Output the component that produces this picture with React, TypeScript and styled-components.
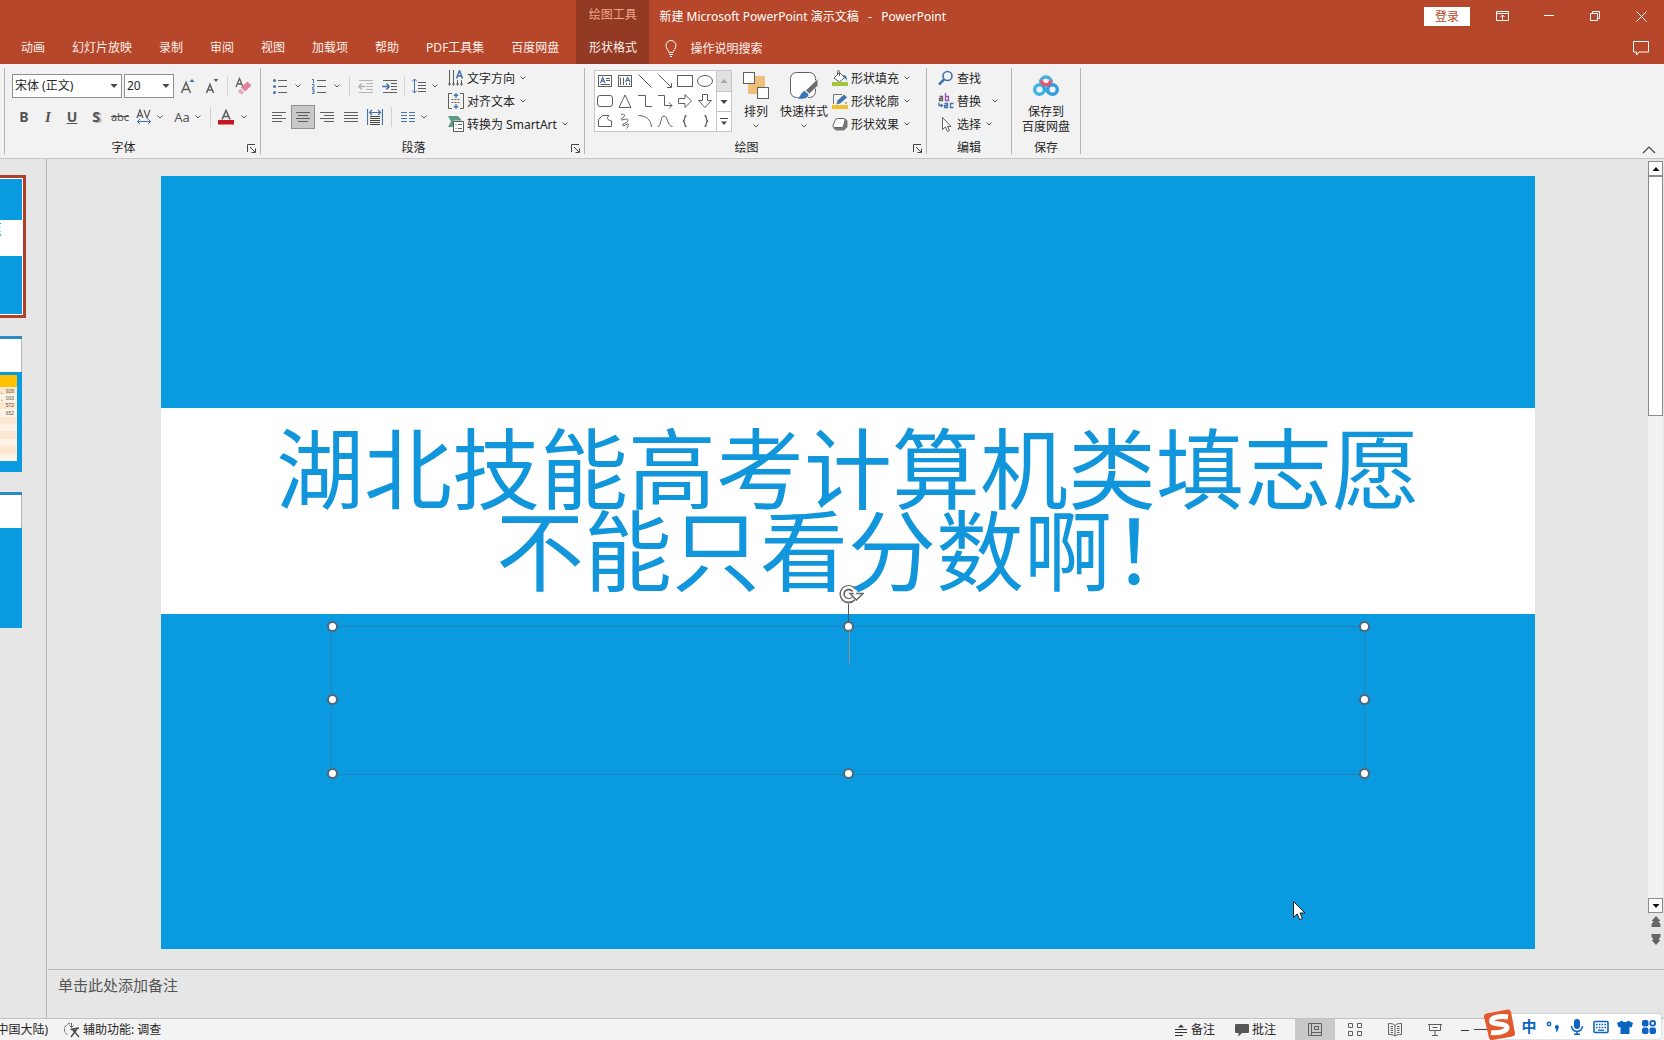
import React from "react";
import styled, { createGlobalStyle } from "styled-components";

const FONT = `"Noto Sans", "Noto Sans CJK SC", sans-serif`;
const RED = "#b7472a";
const SLIDE_BLUE = "#0a9adf";
const INK = "#5f5f5f";
const BLUE = "#4472ab";

const GlobalStyle = createGlobalStyle`
  *, *::before, *::after { box-sizing: border-box; }
  body { margin: 0; font-family: ${FONT}; font-size: 12px; color: #262626; background: #e6e6e6; }
  button, select, textarea, input { font: inherit; color: inherit; margin: 0; }
  button { background: none; border: 0; padding: 0; cursor: pointer; white-space: nowrap; }
  svg { display: block; flex: none; }
`;

const Window = styled.div`
  position: relative;
  display: flex;
  flex-direction: column;
  min-height: 100vh;
  overflow: hidden;
`;

/* ---------- title bar and tabs ---------- */

const Header = styled.header`
  display: flex;
  height: 64px;
  background: ${RED};
  color: #fff;
`;

const Tabs = styled.nav`
  display: flex;
  align-items: flex-end;
  gap: 1px;
  padding: 0 4px 0 8px;
`;

const Tab = styled.button`
  height: 32px;
  padding: 0 13px;
  line-height: 32px;
  color: #fdf1ec;
`;

const ContextTabs = styled.div`
  display: flex;
  flex-direction: column;
  align-items: center;
  width: 73px;
  background: #933a24;
`;

const ContextName = styled.span`
  height: 32px;
  line-height: 30px;
  color: #eda58c;
`;

const HeaderMain = styled.div`
  flex: 1;
  display: flex;
  flex-direction: column;
`;

const HeaderRow = styled.div`
  display: flex;
  align-items: center;
  height: 32px;
`;

const DocTitle = styled.h1`
  flex: 1;
  margin: 0;
  padding-left: 10px;
  font-size: 12px;
  font-weight: 400;
`;

const SignIn = styled.button`
  width: 46px;
  height: 19px;
  margin-right: 10px;
  line-height: 19px;
  background: #fff;
  color: ${RED};
`;

const WindowButton = styled.button`
  display: grid;
  place-items: center;
  width: 46px;
  height: 30px;
`;

const TellMe = styled.button`
  display: flex;
  align-items: center;
  gap: 12px;
  padding-left: 15px;
  margin-right: auto;
  color: #fdf1ec;
`;

/* ---------- ribbon ---------- */

const Ribbon = styled.section`
  position: relative;
  display: flex;
  height: 95px;
  padding: 3px 0 1px 4px;
  background: #f3f2f2;
  border-bottom: 1px solid #c8c6c6;
`;

const Divider = styled.i`
  width: 1px;
  margin: 1px 0 3px;
  background: #b4b4b4;
`;

const GroupBox = styled.div<{ $w: number }>`
  display: flex;
  flex-direction: column;
  width: ${(p) => p.$w}px;
`;

const GroupBody = styled.div<{ $pad?: number }>`
  display: flex;
  height: 72px;
  padding-left: ${(p) => p.$pad ?? 0}px;
`;

const GroupFoot = styled.div`
  display: flex;
  height: 18px;
`;

const GroupName = styled.span`
  flex: 1;
  text-align: center;
  line-height: 18px;
`;

const Launcher = styled.button`
  display: grid;
  place-items: center;
  width: 18px;
  height: 18px;
`;

const Rows = styled.div<{ $w?: number }>`
  display: flex;
  flex-direction: column;
  gap: 6px;
  padding-top: 6px;
  width: ${(p) => (p.$w ? `${p.$w}px` : "auto")};
`;

const Row = styled.div<{ $gap?: number }>`
  display: flex;
  align-items: center;
  gap: ${(p) => p.$gap ?? 0}px;
  height: 25px;
`;

const Sep = styled.i<{ $m?: number }>`
  width: 1px;
  height: 20px;
  margin: 0 ${(p) => p.$m ?? 4}px;
  background: #d2d0d0;
`;

const ComboBox = styled.label<{ $w: number }>`
  display: grid;
  align-items: center;
  width: ${(p) => p.$w}px;
  height: 24px;
  background: #fff;
  border: 1px solid #8f8f98;
  select {
    grid-area: 1 / 1;
    width: 100%;
    height: 22px;
    padding: 0 2px;
    border: 0;
    background: transparent;
    appearance: none;
  }
  svg {
    grid-area: 1 / 1;
    justify-self: end;
    margin-right: 3px;
    pointer-events: none;
  }
`;

const Tool = styled.button<{ $w?: number; $gap?: number; $on?: boolean }>`
  display: flex;
  align-items: center;
  justify-content: center;
  gap: ${(p) => p.$gap ?? 4}px;
  width: ${(p) => p.$w ?? 24}px;
  height: 24px;
  color: #555;
  background: ${(p) => (p.$on ? "#c8c8c8" : "none")};
  box-shadow: ${(p) => (p.$on ? "inset 0 0 0 1px #8f8f8f" : "none")};
`;

const Glyph = styled.span<{ $b?: boolean; $i?: boolean; $u?: boolean; $s?: boolean; $shadow?: boolean; $serif?: boolean; $size?: number }>`
  font-family: ${(p) => (p.$serif ? `"Liberation Serif", serif` : FONT)};
  font-size: ${(p) => p.$size ?? 14}px;
  line-height: 18px;
  font-weight: ${(p) => (p.$b ? 700 : 400)};
  font-style: ${(p) => (p.$i ? "italic" : "normal")};
  text-decoration: ${(p) => (p.$u ? "underline" : p.$s ? "line-through" : "none")};
  text-shadow: ${(p) => (p.$shadow ? "2px 1px 1px #a8a8a8" : "none")};
`;

const Stack = styled.div`
  display: flex;
  flex-direction: column;
`;

const LabelTool = styled.button<{ $gap?: number }>`
  display: flex;
  align-items: center;
  height: 23px;
  padding: 0 4px 2px;
  span { margin: 0 ${(p) => p.$gap ?? 4}px 0 3px; }
`;

const BigTool = styled.button<{ $w: number }>`
  display: flex;
  flex-direction: column;
  align-items: center;
  width: ${(p) => p.$w}px;
  height: 72px;
  padding-top: 3px;
  span { margin: 3px 0 1px; line-height: 18px; }
`;

const SaveTool = styled.button`
  flex: 1;
  display: flex;
  flex-direction: column;
  align-items: center;
  gap: 7px;
  padding-top: 6px;
  line-height: 15px;
`;

const Gallery = styled.div`
  display: flex;
  width: 138px;
  height: 62px;
  margin-top: 3px;
  background: #fff;
  border: 1px solid #c6c6c6;
`;

const ShapeGrid = styled.div`
  flex: 1;
  display: grid;
  grid-template-columns: repeat(6, 20px);
  grid-auto-rows: 20px;
`;

const ShapeCell = styled.button`
  display: grid;
  place-items: center;
`;

const GalleryScroll = styled.div`
  display: grid;
  grid-template-rows: repeat(3, 1fr);
  width: 15px;
  border-left: 1px solid #c6c6c6;
`;

const GalleryButton = styled.button<{ $off?: boolean }>`
  display: grid;
  place-items: center;
  background: ${(p) => (p.$off ? "#e1e1e1" : "#fff")};
  & + & { border-top: 1px solid #c6c6c6; }
`;

const Collapse = styled.button`
  align-self: flex-end;
  margin: 0 8px 3px auto;
`;

/* ---------- work area ---------- */

const Workspace = styled.main`
  flex: 1;
  display: flex;
  background: #e6e6e6;
`;

const ThumbPanel = styled.aside`
  display: flex;
  flex-direction: column;
  align-items: flex-start;
  width: 47px;
  padding-top: 16px;
  border-right: 1px solid #b9b9b9;
`;

const ActiveThumb = styled.button`
  display: flex;
  flex-direction: column;
  width: 26px;
  height: 143px;
  margin-bottom: 18px;
  padding: 1px 1px 1px 0;
  border: 3px solid #b0402a;
  border-left: 0;
  background: #fff;
`;

const MiniBlue = styled.span<{ $grow: number }>`
  flex: ${(p) => p.$grow} 0 0;
  width: 100%;
  background: ${SLIDE_BLUE};
`;

const MiniBand = styled.span`
  flex: 36 0 0;
  display: flex;
  justify-content: flex-end;
  width: 2px;
  overflow: hidden;
  font-size: 15px;
  line-height: 18px;
  color: #1296db;
`;

const Thumb = styled.button`
  display: flex;
  flex-direction: column;
  width: 22px;
  height: 136px;
  margin-bottom: 20px;
  background: ${SLIDE_BLUE};
  border-top: 3px solid #2a8cc2;
`;

const ThumbTitle = styled.span`
  width: 100%;
  height: 33px;
  margin-bottom: 3px;
  background: #fff;
  border-right: 1px solid #b5b5b5;
`;

const MiniTable = styled.table`
  width: 17px;
  height: 86px;
  border-collapse: collapse;
  font: 5px/6px "Liberation Sans", "Noto Sans CJK SC", sans-serif;
  color: #554;
  th { height: 12px; padding: 0; background: #ffc000; }
  td { height: 7px; padding: 0 3px 0 0; text-align: right; background: #fff3e7; }
  tr:nth-child(odd) td { background: #fde6d0; }
`;

const Editor = styled.div`
  flex: 1;
  display: flex;
  flex-direction: column;
  min-width: 0;
`;

const Stage = styled.div`
  flex: 1;
  display: flex;
`;

const Canvas = styled.div`
  flex: 1;
  padding: 17px 113px 20px 114px;
`;

const Slide = styled.article`
  display: grid;
  grid-template-rows: minmax(0, 232fr) minmax(0, 206fr) minmax(0, 335fr);
  width: 100%;
  aspect-ratio: 16 / 9;
  background: ${SLIDE_BLUE};
`;

const SlideBand = styled.div`
  grid-row: 2;
  display: flex;
  align-items: center;
  justify-content: center;
  padding-bottom: 12px;
  background: #fff;
`;

const SlideTitle = styled.h2`
  margin: 0;
  font-family: "Noto Sans CJK SC", sans-serif;
  font-size: 88px;
  line-height: 82px;
  font-weight: 400;
  text-align: center;
  white-space: nowrap;
  color: #1296db;
  span { display: block; }
`;

const SlideBottom = styled.div`
  grid-row: 3;
  padding: 12px 12.4%;
`;

const TextFrame = styled.div`
  position: relative;
  height: 149px;
  border: 1px dotted #3b6f92;
`;

const Handle = styled.i<{ $x: number; $y: number }>`
  position: absolute;
  left: ${(p) => p.$x}%;
  top: ${(p) => p.$y}%;
  width: 11px;
  height: 11px;
  margin: -6px 0 0 -5px;
  border: 2px solid #50687a;
  border-radius: 50%;
  background: #fff;
`;

const RotateHandle = styled.div`
  position: absolute;
  left: 50%;
  top: -45px;
  margin-left: -12px;
`;

const Caret = styled.i`
  position: absolute;
  left: 50%;
  top: 2px;
  width: 1px;
  height: 35px;
  margin-left: 1px;
  background: #8f8f8f;
`;

const MousePointer = styled.svg`
  position: absolute;
  left: 1293px;
  top: 901px;
`;

const ScrollColumn = styled.div`
  display: flex;
  flex-direction: column;
  width: 16px;
  padding: 2px 1px 22px 0;
`;

const ScrollButton = styled.button`
  display: grid;
  place-items: center;
  height: 15px;
  background: #fff;
  border: 1px solid #8b8b8b;
`;

const ScrollThumb = styled.i`
  height: 240px;
  background: #fff;
  border: 1px solid #8b8b8b;
`;

const ScrollTrack = styled.i`
  flex: 1;
  background: #f1f1f1;
`;

const PageButton = styled.button`
  display: grid;
  place-items: center;
  height: 17px;
`;

const Notes = styled.textarea`
  display: block;
  height: 49px;
  margin-left: 1px;
  padding: 3px 10px;
  border: 0;
  border-top: 1px solid #b9b9b9;
  background: transparent;
  font-size: 15px;
  line-height: 24px;
  resize: none;
  overflow: hidden;
  &::placeholder { color: #555; opacity: 1; }
`;

/* ---------- status bar ---------- */

const StatusBar = styled.footer`
  display: flex;
  align-items: stretch;
  height: 22px;
  background: #f3f3f3;
  border-top: 1px solid #c2c2c2;
  line-height: 21px;
`;

const Language = styled.span`
  display: flex;
  justify-content: flex-end;
  width: 48px;
  overflow: hidden;
  white-space: nowrap;
`;

const StatusButton = styled.button<{ $gap: number }>`
  display: flex;
  align-items: center;
  gap: ${(p) => p.$gap}px;
  padding: 0 10px;
`;

const AccessButton = styled(StatusButton)`
  padding: 0 16px;
  margin-right: auto;
`;

const ViewButtons = styled.div`
  display: flex;
  margin-left: 9px;
`;

const ViewButton = styled.button<{ $on?: boolean }>`
  display: grid;
  place-items: center;
  width: 40px;
  background: ${(p) => (p.$on ? "#c9c9c9" : "none")};
`;

const ZoomOut = styled.button`
  display: grid;
  place-items: center;
  width: 19px;
`;

const ZoomSlider = styled.input`
  width: 120px;
  margin-right: 70px;
  appearance: none;
  background: transparent;
  &::-webkit-slider-runnable-track { height: 1px; background: #444; }
  &::-webkit-slider-thumb { appearance: none; width: 1px; height: 1px; }
`;

const InputMethod = styled.div`
  position: absolute;
  right: 3px;
  bottom: 0;
  display: flex;
  align-items: flex-end;
`;

const ImeBar = styled.div`
  display: flex;
  height: 25px;
  margin: 0 0 1px -14px;
  padding-left: 15px;
  background: #fff;
  border-radius: 3px;
  box-shadow: 0 0 2px #9fb4cc;
  color: #0b63c4;
`;

const ImeLogo = styled.svg`
  z-index: 1;
`;

const ImeButton = styled.button`
  display: grid;
  place-items: center;
  width: 24px;
  height: 25px;
  font-size: 15px;
  font-weight: 700;
  line-height: 25px;
`;

/* ---------- drawings ---------- */

type IconProps = { w?: number; h?: number; children: React.ReactNode };
const Icon = ({ w = 16, h = 16, children }: IconProps) => (
  <svg width={w} height={h} viewBox={`0 0 ${w} ${h}`} fill="none" stroke={INK} aria-hidden="true">
    {children}
  </svg>
);

const Chevron = () => (
  <Icon w={8} h={8}><path d="M1.500 2.500 4 5l2.500-2.500" stroke="#555" /></Icon>
);
const Arrow = ({ up, color = "#444" }: { up?: boolean; color?: string }) => (
  <Icon w={8} h={6}><path d={up ? "M.500 5 4 1 7.500 5z" : "M.500 1h7L4 5z"} fill={color} stroke="none" /></Icon>
);

const Lines = ({ rows }: { rows: [number, number][] }) => (
  <Icon>{rows.map(([a, b], i) => <path key={i} d={`M${a} ${3.5 + i * 3}H${b}`} />)}</Icon>
);

const shapes: { name: string; d: React.ReactNode }[] = [
  { name: "文本框", d: <><rect x="1.5" y="2.5" width="13" height="11" /><path d="M3.500 10 5.800 4.500 8 10M4.300 8.200h3" stroke={BLUE} strokeWidth="1.200" /><path d="M9 5.500h4M9 7.500h4M3.500 11.500H13" /></> },
  { name: "竖排文本框", d: <><rect x="1.5" y="2.5" width="13" height="11" /><path d="M3.500 4.500v7.500M6.500 4.500v7.500M9.500 10v2M12.500 10v2" /><path d="M8.500 9 10.700 4.500 13 9M9.400 7.500h2.600" stroke={BLUE} strokeWidth="1.200" /></> },
  { name: "直线", d: <path d="M1.500 1.500 14.500 14.500" /> },
  { name: "箭头", d: <path d="M1.500 1.500 14 14M14.500 10v4.500H10" /> },
  { name: "矩形", d: <rect x="0.5" y="2.5" width="15" height="11" /> },
  { name: "椭圆", d: <ellipse cx="8" cy="8" rx="7.500" ry="5.500" /> },
  { name: "圆角矩形", d: <rect x="0.5" y="2.5" width="15" height="11" rx="2.500" /> },
  { name: "三角形", d: <path d="M8 2 14 14.500H2z" /> },
  { name: "肘形连接符", d: <path d="M1 2.500h7.500v11H15" /> },
  { name: "肘形箭头", d: <path d="M1 2.500h6.500v10H15M12 9.500l3 3-3 3" /> },
  { name: "右箭头", d: <path d="M1.500 5.500h6.500v-4L14.500 8 8 14.500v-4H1.500z" /> },
  { name: "下箭头", d: <path d="M5.500 1.500h5v6h4L8 14.500 1.500 7.500h4z" /> },
  { name: "任意多边形", d: <path d="M1.500 6.500 5.500 2.500h6.500C9.500 5 10 7 14.500 8v5.500h-13z" /> },
  { name: "自由曲线", d: <path d="M4 1.500C8 .500 9 2.500 6 4.500S4 7.500 7 6.500s5 0 3.500 2-5 2-5 3.500 3 .500 4.500-1 2 2-.500 4.500" /> },
  { name: "弧形", d: <path d="M1.500 2.500C9 2.500 14 7 14.500 14" /> },
  { name: "曲线", d: <path d="M.500 13.500C5 13 3 3 7 3s3 10 8.500 10.500" /> },
  { name: "左大括号", d: <path d="M9.500 2.500C6.500 2.500 9 7.500 6 8c3 .500.500 5.500 3.500 5.500" strokeWidth="1.300" /> },
  { name: "右大括号", d: <path d="M7.500 2.500C10.500 2.500 8 7.500 11 8c-3 .500-.500 5.500-3.500 5.500" strokeWidth="1.300" /> },
];

const LauncherIcon = () => (
  <Icon w={9} h={9}><path d="M.500 8V.500H8M3 3l5 5M8.500 4.500v4h-4" stroke="#444" /></Icon>
);

function Group({ name, w, pad, launcher, children }: { name: string; w: number; pad?: number; launcher?: boolean; children: React.ReactNode }) {
  return (
    <>
      <GroupBox $w={w}>
        <GroupBody $pad={pad}>{children}</GroupBody>
        <GroupFoot>
          <GroupName>{name}</GroupName>
          {launcher && <Launcher aria-label={`${name}设置`}><LauncherIcon /></Launcher>}
        </GroupFoot>
      </GroupBox>
      <Divider />
    </>
  );
}

const FontGroup = () => (
  <Group name="字体" w={255} pad={7} launcher>
    <Rows>
      <Row $gap={2}>
        <ComboBox $w={110}>
          <select aria-label="字体名称" defaultValue="宋体 (正文)"><option>宋体 (正文)</option></select>
          <Arrow />
        </ComboBox>
        <ComboBox $w={50}>
          <select aria-label="字号" defaultValue="20"><option>20</option></select>
          <Arrow />
        </ComboBox>
        <Row>
          <Tool aria-label="增大字号"><Icon><path d="M1.500 15 6 4.500 10.500 15M3 11.500h6" strokeWidth="1.500" /><path d="M9.500 4 12 1l2.500 3z" fill={BLUE} stroke="none" /></Icon></Tool>
          <Tool aria-label="减小字号"><Icon><path d="M2.500 15 6 6.500 9.500 15M3.800 12h4.500" strokeWidth="1.500" /><path d="M9.500 1h5L12 4z" fill={INK} stroke="none" /></Icon></Tool>
          <Sep $m={3} />
          <Tool aria-label="清除格式"><Icon w={18} h={18}><path d="M2 10 5.500 1.500 9 10M3.300 7h4.500" strokeWidth="1.300" /><path d="m7 10.500 6.500-6 4 4-6.500 6z" fill="#e0819b" stroke="none" /><path d="m6 11.500 4 4-2 2-4-2.500z" fill="#e9a3b5" stroke="none" /></Icon></Tool>
        </Row>
      </Row>
      <Row>
        <Tool aria-label="加粗"><Glyph $b>B</Glyph></Tool>
        <Tool aria-label="倾斜"><Glyph $i $b $serif $size={15}>I</Glyph></Tool>
        <Tool aria-label="下划线"><Glyph $b $u>U</Glyph></Tool>
        <Tool aria-label="文字阴影"><Glyph $b $shadow>S</Glyph></Tool>
        <Tool aria-label="删除线"><Glyph $s $size={11}>abc</Glyph></Tool>
        <Tool $w={36} aria-label="字符间距">
          <Icon><path d="M1 9 4 1l3 8M2 6.500h4M8 1l3 8 3-8" strokeWidth="1.300" /><path d="M1 12.500h14M4 10l-2.500 2.500L4 15M12 10l2.500 2.500L12 15" stroke={BLUE} /></Icon>
          <Chevron />
        </Tool>
        <Tool $w={40} aria-label="更改大小写"><Glyph $size={13}>Aa</Glyph><Chevron /></Tool>
        <Sep $m={2} />
        <Tool $w={40} $gap={6} aria-label="字体颜色">
          <Icon><path d="M4 10.500 8 1.500l4 9M5.500 7.500h5" strokeWidth="1.600" /><rect y="11" width="16" height="4.500" fill="#c8141c" stroke="none" /></Icon>
          <Chevron />
        </Tool>
      </Row>
    </Rows>
  </Group>
);

const ParagraphGroup = () => (
  <Group name="段落" w={323} pad={6} launcher>
    <Rows $w={177}>
      <Row>
        <Tool $w={40} $gap={6} aria-label="项目符号">
          <Icon><g fill={BLUE} stroke="none"><circle cx="2.500" cy="2.500" r="1.500" /><circle cx="2.500" cy="8.500" r="1.500" /><circle cx="2.500" cy="14.500" r="1.500" /></g><path d="M6 2.500h9M6 8.500h9M6 14.500h9" /></Icon>
          <Chevron />
        </Tool>
        <Tool $w={38} $gap={6} aria-label="编号">
          <Icon><path d="M1 1.500h1.500V5M1 6.500h2v1.700L1 10h2.500M1 11.500h2v4H1M1.500 13.500H3" stroke={BLUE} /><path d="M6 2.500h9M6 8.500h9M6 14.500h9" /></Icon>
          <Chevron />
        </Tool>
        <Sep />
        <Tool aria-label="减少缩进"><Icon><g stroke="#b4b4b4"><path d="M1 2.500h14M8 5.500h7M8 8.500h7M8 11.500h7M1 14.500h14" /><path d="M7 8.500H1M3.500 5.500.800 8.500l2.700 3" strokeWidth="1.400" /></g></Icon></Tool>
        <Tool aria-label="增加缩进"><Icon><path d="M1 2.500h14M9 5.500h6M9 8.500h6M9 11.500h6M1 14.500h14" /><path d="M0 8.500h7M4.500 5.500l2.700 3-2.700 3" stroke={BLUE} strokeWidth="1.500" /></Icon></Tool>
        <Sep $m={2} />
        <Tool $w={36} aria-label="行距">
          <Icon><path d="M3.500 1v14M1 3.500 3.500 1 6 3.500M1 12.500 3.500 15 6 12.500" stroke={BLUE} /><path d="M7 4.500h8M7 7.500h8M7 10.500h8M7 13.500h8" /></Icon>
          <Chevron />
        </Tool>
      </Row>
      <Row>
        <Tool aria-label="左对齐"><Lines rows={[[1, 15], [1, 11], [1, 15], [1, 11]]} /></Tool>
        <Tool $on aria-label="居中"><Lines rows={[[1, 15], [3, 13], [1, 15], [3, 13]]} /></Tool>
        <Tool aria-label="右对齐"><Lines rows={[[1, 15], [5, 15], [1, 15], [5, 15]]} /></Tool>
        <Tool aria-label="两端对齐"><Lines rows={[[1, 15], [1, 15], [1, 15], [1, 15]]} /></Tool>
        <Tool aria-label="分散对齐"><Icon><path d="M.500 0v16M15.500 0v16M3 3.500h10M5 1 2.500 3.500 5 6M11 1l2.500 2.500L11 6" stroke={BLUE} strokeWidth="1.200" /><path d="M3 7.500h10M3 9.500h10M3 11.500h10M3 13.500h10M3 15.500h10" stroke="#444" /></Icon></Tool>
        <Sep />
        <Tool $w={36} aria-label="分栏">
          <Icon><path d="M1 3.500h6M9 3.500h6M1 6.500h6M9 6.500h6M1 9.500h6M9 9.500h6M1 12.500h6M9 12.500h6" stroke={BLUE} /></Icon>
          <Chevron />
        </Tool>
      </Row>
    </Rows>
    <Stack>
      <LabelTool>
        <Icon><path d="M1.500 0v15M5.500 0v15M9.500 10v5M13.500 10v5M.500 13.500l1 2 1-2M4.500 13.500l1 2 1-2M8.500 13.500l1 2 1-2M12.500 13.500l1 2 1-2" /><path d="M8.500 8.500 11.500.500l3 8M9.500 6h4" stroke={BLUE} strokeWidth="1.500" /></Icon>
        <span>文字方向</span><Chevron />
      </LabelTool>
      <LabelTool>
        <Icon><path d="M4 .500H.500v15H4M12 .500h3.500v15H12" /><path d="M8 1v4M6 3l2-2 2 2M8 15v-4M6 13l2 2 2-2" stroke={BLUE} strokeWidth="1.300" /><path d="M3.500 6.500h9M3.500 9.500h9" strokeDasharray="2 1" /></Icon>
        <span>对齐文本</span><Chevron />
      </LabelTool>
      <LabelTool>
        <Icon><path d="M0 0h10l4 4.500H5.500V11H0l3-5.500z" fill="#5d9c87" stroke="none" /><rect x="5.500" y="5.500" width="10" height="10" fill="#fff" /><path d="M7.500 8.500h1M10 8.500h4M7.500 12.500h1M10 12.500h4" /></Icon>
        <span>转换为 SmartArt</span><Chevron />
      </LabelTool>
    </Stack>
  </Group>
);

const DrawingGroup = () => (
  <Group name="绘图" w={341} pad={9} launcher>
    <Gallery>
      <ShapeGrid>
        {shapes.map((s) => <ShapeCell key={s.name} aria-label={s.name}><Icon>{s.d}</Icon></ShapeCell>)}
      </ShapeGrid>
      <GalleryScroll>
        <GalleryButton $off aria-label="上一行"><Arrow up color="#aaa" /></GalleryButton>
        <GalleryButton aria-label="下一行"><Arrow /></GalleryButton>
        <GalleryButton aria-label="其他"><Icon w={8} h={8}><path d="M0 .500h8" stroke="#444" /><path d="M1 3.500h6L4 7z" fill="#444" stroke="none" /></Icon></GalleryButton>
      </GalleryScroll>
    </Gallery>
    <BigTool $w={48}>
      <Icon w={28} h={30}><rect x="12" y="6" width="11" height="11" fill="#eec07a" stroke="none" /><rect x="6" y="14" width="10" height="10" fill="#eec07a" stroke="none" /><rect x="1.500" y="2.500" width="11" height="11" fill="#fff" /><rect x="15.500" y="17.500" width="11" height="11" fill="#fff" /></Icon>
      <span>排列</span><Chevron />
    </BigTool>
    <BigTool $w={48}>
      <Icon w={30} h={30}><rect x="1.500" y="2.500" width="25" height="25" rx="6" fill="#fff" /><path d="M29 8.500v7L20.500 24l-4-3.500z" fill="#6b6b6b" stroke="#f3f2f2" /><path d="M15.500 20.500 20 24c0 5-6 6-12.500 5 4-2.500 4-7.500 8-8.500z" fill="#3c76b8" stroke="#fff" /></Icon>
      <span>快速样式</span><Chevron />
    </BigTool>
    <Stack>
      <LabelTool>
        <Icon><path d="m2 8 5.500-5.500 5 5L7.500 12z" fill="#fff" /><path d="M7.500 6V1.500a1 1 0 0 0-2 0V5" /><path d="M11 5c3 0 4 2 4 6-1-2-1.500-2.500-3-3z" fill={BLUE} stroke="none" /><rect y="12" width="16" height="4" fill="#a2c73c" stroke="none" /></Icon>
        <span>形状填充</span><Chevron />
      </LabelTool>
      <LabelTool>
        <Icon><path d="M10 1.500H1.500V11M14 9v2" stroke="#777" /><path d="m5.500 7.500 6.500-6 3 3-7 6-3.500 1z" fill={BLUE} stroke="none" /><rect y="12" width="16" height="4" fill="#f0c02c" stroke="none" /></Icon>
        <span>形状轮廓</span><Chevron />
      </LabelTool>
      <LabelTool>
        <Icon><path d="M6 2.500h7.500L15.500 5v6l-3.500 3.500H4L1 12z" fill="#777" stroke="none" /><path d="M5.500 2.500h6a1.500 1.500 0 0 1 1.500 2l-1.500 5.500a2 2 0 0 1-2 1.500h-7a1.500 1.500 0 0 1-1.500-2L3 4.500a3 3 0 0 1 2.500-2z" fill="#fff" /></Icon>
        <span>形状效果</span><Chevron />
      </LabelTool>
    </Stack>
  </Group>
);

const EditGroup = () => (
  <Group name="编辑" w={84} pad={7}>
    <Stack>
      <LabelTool>
        <Icon><circle cx="9.500" cy="6" r="4.500" stroke={BLUE} strokeWidth="1.600" /><path d="m6 9.500-5 5" stroke={BLUE} strokeWidth="2.500" /></Icon>
        <span>查找</span>
      </LabelTool>
      <LabelTool $gap={10}>
        <Icon>
          <g strokeWidth="1.300"><path d="M1.500 3.500h3v4h-3v-2h3" /><path d="M7.500 0v7.500h3v-4h-3" stroke="#9257ae" /><path d="M1 9.500v3h3M3 11l1.500 1.500L3 14" stroke={BLUE} /><path d="M6.500 10.500h3v4h-3v-2h3M15.500 10.500h-3v4h3" stroke={BLUE} /></g>
        </Icon>
        <span>替换</span><Chevron />
      </LabelTool>
      <LabelTool>
        <Icon><path d="M4.500 1.500v12L7.500 11l2 4.500 2-1-2-4h3.500z" fill="#fff" /></Icon>
        <span>选择</span><Chevron />
      </LabelTool>
    </Stack>
  </Group>
);

const SaveGroup = () => (
  <Group name="保存" w={68}>
    <SaveTool>
      <Icon w={26} h={24}>
        <g strokeWidth="3.400">
          <circle cx="6.500" cy="16.500" r="4.800" stroke="#3db4e4" />
          <circle cx="19.500" cy="16.500" r="4.800" stroke="#2f9be2" />
          <path d="M7.500 9.500a5.500 5.500 0 0 1 11 0" stroke="#4aaedb" />
          <path d="M8.500 7.500a4.500 4.500 0 1 0 9 0" stroke="#e4536c" />
          <path d="M10 13.500c1.500 1.500 3.500 4.500 6 6.500" stroke="#35a5e2" strokeWidth="3" />
        </g>
      </Icon>
      <span>保存到<br />百度网盘</span>
    </SaveTool>
  </Group>
);

const handles: [number, number][] = [[0, 0], [50, 0], [100, 0], [0, 50], [100, 50], [0, 100], [50, 100], [100, 100]];
const tabs = ["动画", "幻灯片放映", "录制", "审阅", "视图", "加载项", "帮助", "PDF工具集", "百度网盘"];
const miniRows = ["、928", "、003", "572", "652", "", "", "", "", "", ""];

export default function App() {
  return (
    <Window>
      <GlobalStyle />
      <Header>
        <Tabs>{tabs.map((t) => <Tab key={t}>{t}</Tab>)}</Tabs>
        <ContextTabs>
          <ContextName>绘图工具</ContextName>
          <Tab>形状格式</Tab>
        </ContextTabs>
        <HeaderMain>
          <HeaderRow>
            <DocTitle>新建 Microsoft PowerPoint 演示文稿&nbsp;&nbsp; -&nbsp;&nbsp; PowerPoint</DocTitle>
            <SignIn>登录</SignIn>
            <WindowButton aria-label="功能区显示选项"><Icon w={14} h={12}><path d="M.500 1.500h12v9H.500zM.500 3.500h12M6.500 9.500V5M4.500 7l2-2 2 2" stroke="#fff" /></Icon></WindowButton>
            <WindowButton aria-label="最小化"><Icon w={10} h={10}><path d="M0 4.500h10" stroke="#fff" /></Icon></WindowButton>
            <WindowButton aria-label="还原"><Icon w={10} h={10}><path d="M.500 2.500h7v7h-7zM2.500 2V.500h7v7H8" stroke="#fff" /></Icon></WindowButton>
            <WindowButton aria-label="关闭"><Icon w={11} h={11}><path d="m.500.500 10 10M10.500.500l-10 10" stroke="#fff" /></Icon></WindowButton>
          </HeaderRow>
          <HeaderRow>
            <TellMe>
              <Icon w={14} h={17}><path d="M5 12.500c0-2-3-3.500-3-7a5 5 0 0 1 10 0c0 3.500-3 5-3 7zM5 14.500h4M6 16.500h2" stroke="#fff" /></Icon>
              操作说明搜索
            </TellMe>
            <WindowButton aria-label="批注"><Icon w={16} h={15}><path d="M.500.500h15v10.500H6l-2.500 3V11H.500z" stroke="#fff" /></Icon></WindowButton>
          </HeaderRow>
        </HeaderMain>
      </Header>

      <Ribbon>
        <Divider />
        <FontGroup />
        <ParagraphGroup />
        <DrawingGroup />
        <EditGroup />
        <SaveGroup />
        <Collapse aria-label="折叠功能区"><Icon w={14} h={8}><path d="m1 7 6-6 6 6" stroke="#444" strokeWidth="1.200" /></Icon></Collapse>
      </Ribbon>

      <Workspace>
        <ThumbPanel>
          <ActiveThumb aria-label="幻灯片 1">
            <MiniBlue $grow={41} />
            <MiniBand>愿</MiniBand>
            <MiniBlue $grow={58} />
          </ActiveThumb>
          <Thumb aria-label="幻灯片 2">
            <ThumbTitle />
            <MiniTable>
              <thead><tr><th /></tr></thead>
              <tbody>{miniRows.map((r, i) => <tr key={i}><td>{r}</td></tr>)}</tbody>
            </MiniTable>
          </Thumb>
          <Thumb aria-label="幻灯片 3"><ThumbTitle /></Thumb>
        </ThumbPanel>
        <Editor>
          <Stage>
            <Canvas>
              <Slide>
                <SlideBand>
                  <SlideTitle><span>湖北技能高考计算机类填志愿</span><span>不能只看分数啊！</span></SlideTitle>
                </SlideBand>
                <SlideBottom>
                  <TextFrame>
                    {handles.map(([x, y]) => <Handle key={`${x}-${y}`} $x={x} $y={y} />)}
                    <RotateHandle>
                      <Icon w={28} h={40}>
                        <path d="M12.500 22v17" stroke="#555" />
                        <path d="M17.500 16.500A6.500 6.500 0 1 1 18 8.500" stroke="#666" strokeWidth="5.500" />
                        <path d="M14 11.500h13L20.500 18z" fill="#fff" stroke="#666" strokeWidth="1.500" />
                        <path d="M17.300 16.300A6.500 6.500 0 1 1 19 11v1.500" stroke="#fff" strokeWidth="2.500" />
                      </Icon>
                    </RotateHandle>
                    <Caret />
                  </TextFrame>
                </SlideBottom>
              </Slide>
            </Canvas>
            <ScrollColumn>
              <ScrollButton aria-label="向上滚动"><Arrow up color="#111" /></ScrollButton>
              <ScrollThumb />
              <ScrollTrack />
              <ScrollButton aria-label="向下滚动"><Arrow color="#111" /></ScrollButton>
              <PageButton aria-label="上一张幻灯片"><Icon w={10} h={12}><path d="M5 0 9.500 5H7.500L9.500 8.500V11h-9V8.500L2.500 5H.500z" fill="#666" stroke="none" /></Icon></PageButton>
              <PageButton aria-label="下一张幻灯片"><Icon w={10} h={12}><path d="M5 12 .500 7h2L.500 3.500V1h9v2.500L7.500 7h2z" fill="#666" stroke="none" /></Icon></PageButton>
            </ScrollColumn>
          </Stage>
          <Notes aria-label="备注" placeholder="单击此处添加备注" />
        </Editor>
      </Workspace>

      <StatusBar>
        <Language>中国大陆)</Language>
        <AccessButton $gap={3}>
          <Icon><path d="M6 1.500A6 6 0 0 0 4 13" strokeDasharray="3 1" /><path d="M7.500 1v4M5.500 3.500l2 2 2-2" /><path d="M6.500 7.500 15 6M8.500 7.500 15 15M13 7 7 15M10.500 8v3" strokeWidth="1.300" stroke="#444" /></Icon>
          辅助功能: 调查
        </AccessButton>
        <StatusButton $gap={4}>
          <Icon w={12} h={12}><path d="M0 5.500h12M0 8.500h12M0 11.500h8" stroke="#333" /><path d="M3 3.500 6 .500l3 3z" fill="#333" stroke="none" /></Icon>
          备注
        </StatusButton>
        <StatusButton $gap={3}>
          <Icon w={14} h={14}><path d="M1 1h12a1 1 0 0 1 1 1v7a1 1 0 0 1-1 1H7l-3.500 3.500V10H1a1 1 0 0 1-1-1V2a1 1 0 0 1 1-1z" fill="#555" stroke="none" /></Icon>
          批注
        </StatusButton>
        <ViewButtons>
          <ViewButton $on aria-label="普通视图"><Icon w={14} h={14}><path d="M.500.500h13v12H.500zM3.500.500v12M3.500 9.500h10M6.500 3.500h4v3h-4z" /></Icon></ViewButton>
          <ViewButton aria-label="幻灯片浏览"><Icon w={14} h={14}><path d="M.500.500h4v4h-4zM9.500.500h4v4h-4zM.500 8.500h4v4h-4zM9.500 8.500h4v4h-4z" /></Icon></ViewButton>
          <ViewButton aria-label="阅读视图"><Icon w={14} h={14}><path d="M7 2.500C5 .500 3 .500.500.500v11c2.500 0 4.500 0 6.500 1.500 2-1.500 4-1.500 6.500-1.500V.500C11 .500 9 .500 7 2.500zM7 2.500V13M2.500 3.500H5M2.500 5.500H5M2.500 7.500H5M2.500 9.500H5M9 3.500h2.500M9 5.500h2.500M9 7.500h2.500M9 9.500h2.500" /></Icon></ViewButton>
          <ViewButton aria-label="幻灯片放映"><Icon w={14} h={14}><path d="M0 1.500h14M1.500 1.500v6h11v-6M7 7.500v5M4 12.500h6M4.500 4.500h5" /></Icon></ViewButton>
        </ViewButtons>
        <ZoomOut aria-label="缩小"><Icon w={8} h={8}><path d="M0 4.500h8" stroke="#333" /></Icon></ZoomOut>
        <ZoomSlider type="range" aria-label="显示比例" />
      </StatusBar>

      <InputMethod>
        <ImeLogo width="33" height="31" viewBox="0 0 32 31" aria-hidden="true">
          <path d="M3 4.500 24 .500a3 3 0 0 1 3.500 2.500l4 21a3 3 0 0 1-2.500 3.500L9 31a3 3 0 0 1-3.500-2.500L.500 8A3 3 0 0 1 3 4.500z" fill="#e2592d" />
          <path d="M24.500 8C16 6.500 7.500 8.500 8 12.500c.500 3.500 15.500 1.500 15.500 6 0 4-8.500 6-16 5" fill="none" stroke="#fff" strokeWidth="5" />
        </ImeLogo>
        <ImeBar>
          <ImeButton>中</ImeButton>
          <ImeButton aria-label="中文标点"><Icon><circle cx="4" cy="5" r="1.700" stroke="#0b63c4" strokeWidth="1.500" /><path d="M10 7.500a2 2 0 1 1 3.300 2c0 2-1 3-2.800 4 .800-1.500 1-2.500.500-3.500a2 2 0 0 1-1-2.500z" fill="#0b63c4" stroke="none" /></Icon></ImeButton>
          <ImeButton aria-label="语音"><Icon><rect x="5" y="0" width="6" height="10" rx="3" fill="#0b63c4" stroke="none" /><path d="M2.500 7a5.500 5.500 0 0 0 11 0M8 12.500V15M5 15.300h6" stroke="#0b63c4" strokeWidth="1.500" /></Icon></ImeButton>
          <ImeButton aria-label="软键盘"><Icon><rect x="1" y="2.500" width="14" height="11" rx="1" stroke="#0b63c4" strokeWidth="1.600" /><path d="M3 5.500h10M3 8.500h10" stroke="#0b63c4" strokeWidth="1.600" strokeDasharray="1.600 1.200" /><path d="M5 11.200h6" stroke="#0b63c4" strokeWidth="1.300" /></Icon></ImeButton>
          <ImeButton aria-label="皮肤"><Icon><path d="M5 1.500c1 2 5 2 6 0l5 2.500-1.500 4.500-2-.500v7h-9v-7l-2 .500L0 4z" fill="#0b63c4" stroke="none" /></Icon></ImeButton>
          <ImeButton aria-label="工具箱"><Icon><g fill="#0b63c4" stroke="none"><rect x="1" y="1" width="6.500" height="6.500" rx="2" /><rect x="1" y="8.500" width="6.500" height="6.500" rx="2" /><rect x="8.500" y="8.500" width="6.500" height="6.500" rx="2" /></g><circle cx="11.700" cy="4.300" r="2.400" stroke="#0b63c4" strokeWidth="1.800" /></Icon></ImeButton>
        </ImeBar>
      </InputMethod>

      <MousePointer width="14" height="20" viewBox="0 0 14 20" aria-hidden="true">
        <path d="M.500.500v16l3.700-3.500 2.500 5.700 2.800-1.200-2.500-5.500h5z" fill="#fff" stroke="#1b1b1b" />
      </MousePointer>
    </Window>
  );
}
